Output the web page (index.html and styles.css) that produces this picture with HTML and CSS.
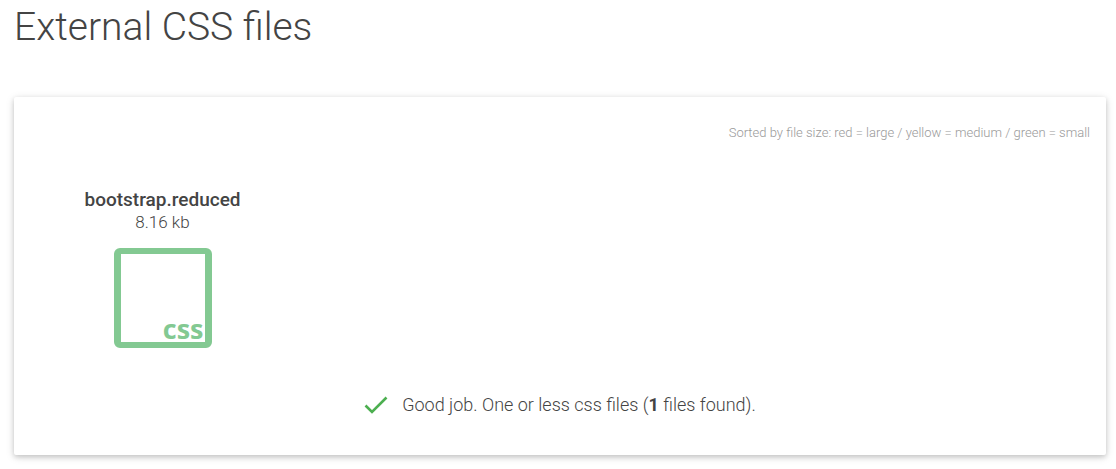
FILE: index.html
```html
<!DOCTYPE html>
<html lang="en">
<head>
<meta charset="utf-8">
<title>External CSS files</title>
<link rel="stylesheet" href="styles.css">
</head>
<body>
<main class="page">
  <h1 class="title">External CSS files</h1>
  <section class="card">
    <p class="legend">Sorted by file size: red = large / yellow = medium / green = small</p>
    <div class="files">
      <article class="file">
        <h2 class="file-name">bootstrap.reduced</h2>
        <p class="file-size">8.16 kb</p>
        <div class="file-icon"><span class="file-type">css</span></div>
      </article>
    </div>
    <p class="result">
      <svg class="check" viewBox="0 0 24 18" aria-hidden="true"><path d="M1.5 9.5 8 16 22.5 1.5" fill="none" stroke="#4caf50" stroke-width="2.6"/></svg>
      <span>Good job. One or less css files (<b>1</b> files found).</span>
    </p>
  </section>
</main>
</body>
</html>
```
FILE: styles.css
```css
* { box-sizing: border-box; }
body {
  margin: 0;
  background: #fff;
  color: #444;
  font-family: "Roboto Slab", Roboto, sans-serif;
  font-size: 17px;
  font-weight: 300;
  line-height: 22px;
}
h1, h2, p { margin: 0; }
.page { padding: 3px 10px 14px 14px; }
.title {
  margin-bottom: 46px;
  font-size: 39px;
  font-weight: 300;
  line-height: 48px;
}
.card {
  padding: 26px 16px 39px;
  background: #fff;
  border-radius: 2px;
  box-shadow: 0 2px 5px 0 rgba(0, 0, 0, 0.16), 0 2px 10px 0 rgba(0, 0, 0, 0.12);
}
.legend {
  color: #999;
  font-size: 13px;
  line-height: 20px;
  text-align: right;
}
.files {
  display: grid;
  grid-template-columns: repeat(4, 1fr);
  margin-top: 46px;
}
.file {
  display: flex;
  flex-direction: column;
  align-items: center;
}
.file-name {
  font-size: 19px;
  font-weight: 500;
  line-height: 22px;
}
.file-icon {
  display: flex;
  align-items: flex-end;
  justify-content: flex-end;
  width: 98px;
  height: 100px;
  margin-top: 15px;
  padding-right: 1px;
  border: 7px solid #83c992;
  border-top-width: 6px;
  border-bottom-width: 6px;
  border-radius: 6px;
}
.file-type {
  color: #83c992;
  font-family: "Open Sans", sans-serif;
  font-size: 27px;
  font-weight: 700;
  line-height: 26px;
}
.result {
  display: flex;
  align-items: center;
  justify-content: center;
  gap: 14px;
  margin-top: 46px;
  font-size: 18px;
}
.result b { font-weight: 700; }
.check { width: 24px; height: 18px; }
```
